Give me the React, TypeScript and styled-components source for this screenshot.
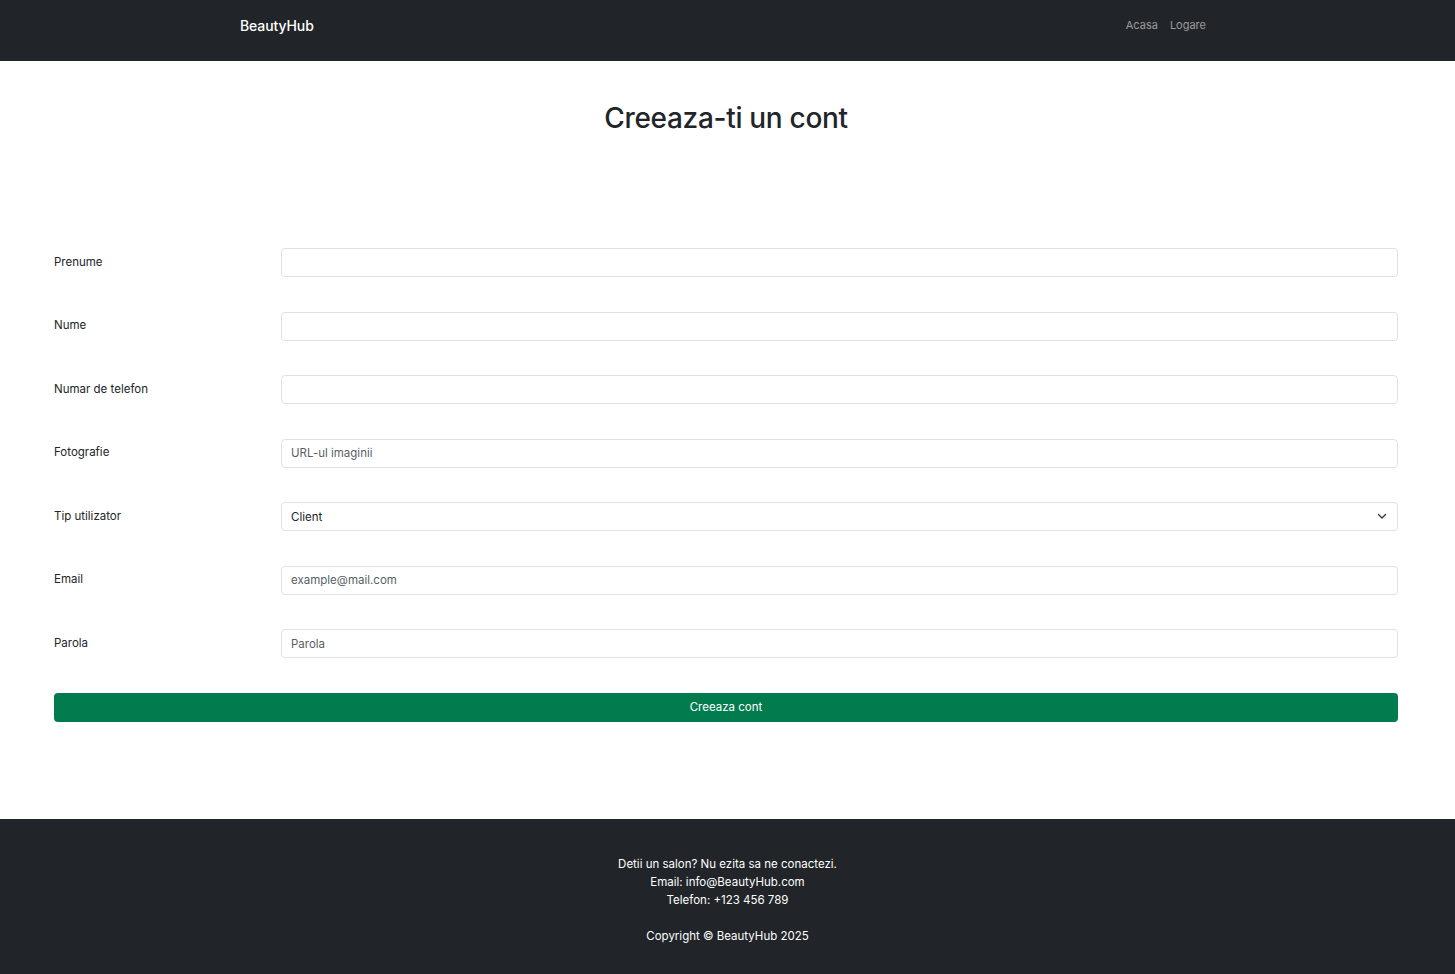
import React from "react";
import styled, { createGlobalStyle } from "styled-components";

const Global = createGlobalStyle`
  html, body { margin: 0; padding: 0; }
  body {
    font-family: Inter, "Noto Sans", "Liberation Sans", sans-serif;
    color: #212529;
    background: #fff;
    -webkit-font-smoothing: antialiased;
  }
  * { box-sizing: border-box; }
`;

const Page = styled.div`
  min-height: 974px;
  display: flex;
  flex-direction: column;
`;

const NavBar = styled.nav`
  height: 61px;
  background: #212529;
  display: flex;
  align-items: center;
  justify-content: space-between;
  padding: 0 249px 11px 240px;
`;

const Brand = styled.a`
  color: #fff;
  font-size: 14px;
  font-weight: 500;
  text-decoration: none;
  margin-top: 1px;
  letter-spacing: -0.1px;
`;

const NavLinks = styled.div`
  display: flex;
  gap: 12px;
  margin-top: -1px;
`;

const NavLink = styled.a`
  color: rgba(255, 255, 255, 0.55);
  font-size: 11px;
  text-decoration: none;
`;

const Main = styled.main`
  flex: 1;
  padding: 0 57px 0 54px;
`;

const Title = styled.h1`
  margin: 0;
  padding-top: 40px;
  text-align: center;
  font-size: 28px;
  font-weight: 500;
  line-height: 34px;
  letter-spacing: -0.3px;
`;

const Form = styled.form`
  margin-top: 113px;
  display: flex;
  flex-direction: column;
  gap: 34.5px;
  padding-bottom: 96px;
`;

const Row = styled.div`
  display: grid;
  grid-template-columns: 227px 1fr;
  align-items: center;
`;

const Label = styled.label`
  font-size: 11.5px;
  line-height: 18px;
  margin-top: -2px;
`;

const Input = styled.input`
  height: 29px;
  width: 100%;
  border: 1px solid #dee2e6;
  border-radius: 4px;
  padding: 0 9px;
  font-family: inherit;
  font-size: 11.5px;
  color: #212529;
  background: #fff;
  outline: none;
  &::placeholder { color: #595f65; }
`;

const SelectWrap = styled.div`
  position: relative;
`;

const Select = styled.select`
  height: 29px;
  width: 100%;
  border: 1px solid #dee2e6;
  border-radius: 4px;
  padding: 0 9px;
  font-family: inherit;
  font-size: 11.5px;
  color: #212529;
  background: #fff;
  appearance: none;
  outline: none;
`;

const Chevron = styled.svg`
  position: absolute;
  right: 11px;
  top: 10px;
  pointer-events: none;
`;

const Button = styled.button`
  height: 29px;
  width: 100%;
  border: none;
  border-radius: 4px;
  background: #027c4e;
  color: #fff;
  font-family: inherit;
  font-size: 11.5px;
`;

const Footer = styled.footer`
  background: #212529;
  color: #fff;
  height: 155px;
  padding-top: 36px;
  text-align: center;
  font-size: 11.5px;
  line-height: 18px;
`;

const FooterBlock = styled.p`
  margin: 0 0 18px;
`;

const fields = [
  { label: "Prenume", placeholder: "" },
  { label: "Nume", placeholder: "" },
  { label: "Numar de telefon", placeholder: "" },
  { label: "Fotografie", placeholder: "URL-ul imaginii" },
];

export default function App() {
  return (
    <Page>
      <Global />
      <NavBar>
        <Brand href="#">BeautyHub</Brand>
        <NavLinks>
          <NavLink href="#">Acasa</NavLink>
          <NavLink href="#">Logare</NavLink>
        </NavLinks>
      </NavBar>
      <Main>
        <Title>Creeaza-ti un cont</Title>
        <Form onSubmit={(e) => e.preventDefault()}>
          {fields.map((f) => (
            <Row key={f.label}>
              <Label>{f.label}</Label>
              <Input placeholder={f.placeholder} />
            </Row>
          ))}
          <Row>
            <Label>Tip utilizator</Label>
            <SelectWrap>
              <Select defaultValue="Client">
                <option>Client</option>
                <option>Salon</option>
              </Select>
              <Chevron width="10" height="8" viewBox="0 0 10 8">
                <path d="M1.5 2.5 L5 6 L8.5 2.5" fill="none" stroke="#343a40" strokeWidth="1.4" strokeLinecap="round" strokeLinejoin="round" />
              </Chevron>
            </SelectWrap>
          </Row>
          <Row>
            <Label>Email</Label>
            <Input placeholder="example@mail.com" />
          </Row>
          <Row>
            <Label>Parola</Label>
            <Input type="password" placeholder="Parola" />
          </Row>
          <Button type="submit">Creeaza cont</Button>
        </Form>
      </Main>
      <Footer>
        <FooterBlock>
          Detii un salon? Nu ezita sa ne conactezi.
          <br />
          Email: info@BeautyHub.com
          <br />
          Telefon: +123 456 789
        </FooterBlock>
        <FooterBlock>Copyright © BeautyHub 2025</FooterBlock>
      </Footer>
    </Page>
  );
}
